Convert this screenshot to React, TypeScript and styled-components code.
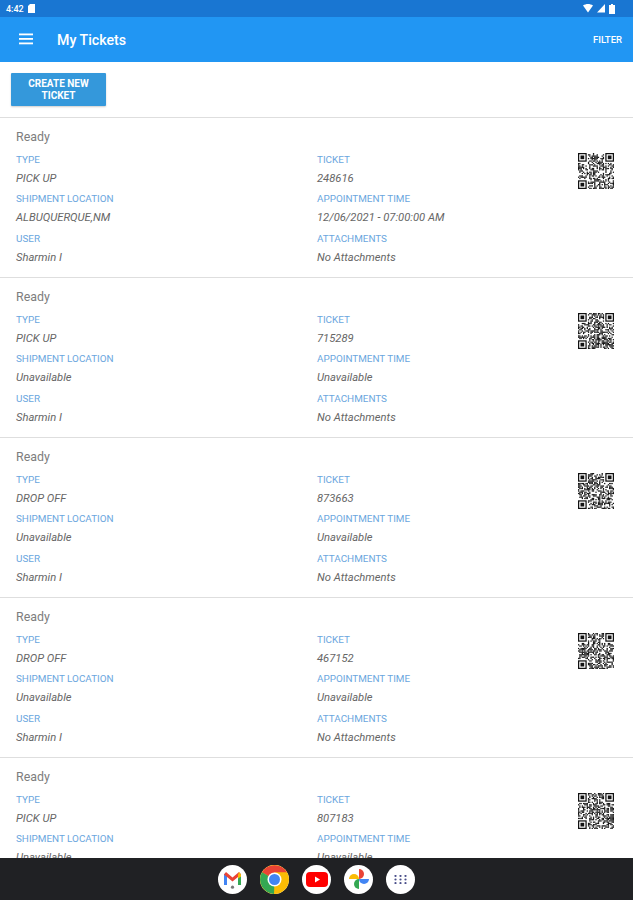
import React from 'react';
import styled, { createGlobalStyle } from 'styled-components';

const GlobalStyle = createGlobalStyle`
  html, body {
    margin: 0;
    padding: 0;
    background: #fff;
    font-family: Roboto, "Liberation Sans", sans-serif;
  }
`;

const Screen = styled.div`
  width: 633px;
  height: 900px;
  display: flex;
  flex-direction: column;
  overflow: hidden;
`;

const StatusBar = styled.div`
  height: 17px;
  flex: none;
  background: #1976d2;
  display: flex;
  align-items: center;
  justify-content: space-between;
  padding: 0 18px 0 6px;
  color: #fff;
  font-size: 9px;
  font-weight: 500;
`;

const StatusGroup = styled.div`
  display: flex;
  align-items: center;
  gap: 4px;
`;

const AppBar = styled.header`
  height: 45px;
  flex: none;
  background: #2196f3;
  color: #fff;
  display: flex;
  align-items: center;
  padding: 0 11px 0 19px;
`;

const MenuIcon = styled.svg`
  display: block;
  width: 14px;
  height: 12px;
  margin-top: -2px;
`;

const Title = styled.h1`
  margin: 0 0 0 24px;
  font-size: 14.2px;
  font-weight: 500;
  flex: 1;
`;

const FilterLink = styled.span`
  font-size: 9.5px;
  font-weight: 500;
`;

const Toolbar = styled.div`
  height: 55px;
  flex: none;
  padding: 11px;
  box-sizing: border-box;
`;

const CreateButton = styled.button`
  display: block;
  width: 95px;
  height: 33px;
  padding: 0 8px;
  border: 0;
  border-radius: 1px;
  background: #3498db;
  box-shadow: 0 1px 2px rgba(0, 0, 0, 0.2);
  color: #fff;
  font-family: inherit;
  font-size: 10px;
  font-weight: 700;
  line-height: 12px;
`;

const List = styled.main`
  flex: 1;
  min-height: 0;
  overflow: hidden;
`;

const Card = styled.article`
  height: 160px;
  box-sizing: border-box;
  border-top: 1px solid #dedede;
  padding: 10px 19px 0 16px;
  display: grid;
  grid-template-columns: 301px 1fr 36px;
  grid-template-rows: 20px auto;
`;

const Status = styled.div`
  grid-column: 1 / -1;
  color: #7d7d7d;
  font-size: 12.4px;
  line-height: 18px;
`;

const Column = styled.div`
  display: flex;
  flex-direction: column;
  padding-top: 1.5px;
`;

const Label = styled.div`
  color: #6aa6de;
  font-size: 9.9px;
  line-height: 20px;
  height: 19px;
  text-transform: uppercase;
`;

const Value = styled.div`
  color: #666;
  font-size: 11.2px;
  font-style: italic;
  line-height: 20px;
  height: 20.5px;
`;

const QrBox = styled.svg`
  display: block;
  width: 36px;
  height: 36px;
  margin-top: 5px;
  filter: blur(0.4px);
`;

const Dock = styled.nav`
  height: 42px;
  flex: none;
  background: #202124;
  display: flex;
  align-items: center;
  justify-content: center;
  gap: 13px;
`;

const DockIcon = styled.div`
  width: 29px;
  height: 29px;
  border-radius: 50%;
  background: #fff;
  display: flex;
  flex-direction: column;
  align-items: center;
  justify-content: center;
`;

type Ticket = {
  type: string;
  ticket: string;
  location: string;
  time: string;
};

const tickets: Ticket[] = [
  { type: 'PICK UP', ticket: '248616', location: 'ALBUQUERQUE,NM', time: '12/06/2021 - 07:00:00 AM' },
  { type: 'PICK UP', ticket: '715289', location: 'Unavailable', time: 'Unavailable' },
  { type: 'DROP OFF', ticket: '873663', location: 'Unavailable', time: 'Unavailable' },
  { type: 'DROP OFF', ticket: '467152', location: 'Unavailable', time: 'Unavailable' },
  { type: 'PICK UP', ticket: '807183', location: 'Unavailable', time: 'Unavailable' },
];

// fake qr, modules come from the ticket number
function QrCode({ seed }: { seed: string }) {
  const size = 29;
  let state = Number(seed);
  const cells: React.ReactNode[] = [];

  const inFinder = (x: number, y: number) =>
    (x < 8 && y < 8) || (x >= size - 8 && y < 8) || (x < 8 && y >= size - 8);

  for (let y = 0; y < size; y++) {
    for (let x = 0; x < size; x++) {
      state = (state * 1103515245 + 12345) % 2147483648;
      if (!inFinder(x, y) && (state >> 8) % 100 < 50) {
        cells.push(<rect key={`${x}-${y}`} x={x} y={y} width={1.02} height={1.02} />);
      }
    }
  }

  const finders = [
    [0, 0],
    [size - 7, 0],
    [0, size - 7],
  ];

  return (
    <QrBox viewBox={`0 0 ${size} ${size}`} fill="#111">
      {cells}
      {finders.map(([x, y]) => (
        <g key={`${x}-${y}`}>
          <rect x={x} y={y} width={7} height={7} />
          <rect x={x + 1} y={y + 1} width={5} height={5} fill="#fff" />
          <rect x={x + 2} y={y + 2} width={3} height={3} />
        </g>
      ))}
    </QrBox>
  );
}

function StatusIcons() {
  return (
    <StatusGroup>
      <svg width="10" height="9" viewBox="0 0 10 9">
        <path d="M0 1.5C3 -0.5 7 -0.5 10 1.5L5 8.5Z" fill="#fff" />
      </svg>
      <svg width="8" height="9" viewBox="0 0 8 9">
        <path d="M8 0V8.5H0Z" fill="#fff" />
      </svg>
      <svg width="6" height="10" viewBox="0 0 6 10">
        <path d="M2 0H4V1H6V10H0V1H2Z" fill="#fff" />
      </svg>
    </StatusGroup>
  );
}

function GmailIcon() {
  return (
    <>
      <svg width="17" height="13" viewBox="0 0 17 13" style={{ marginTop: 2 }}>
        <path d="M0 13V2L3 1V13Z" fill="#4285f4" />
        <path d="M14 13V1L17 2V13Z" fill="#34a853" />
        <path d="M0 2.5L2 0L8.5 5.5L15 0L17 2.5L8.5 9.5Z" fill="#ea4335" />
        <path d="M14 3L15 0L17 2.5V4.5L14 6.5Z" fill="#fbbc04" />
      </svg>
      <svg width="5" height="4" viewBox="0 0 5 4">
        <circle cx="2.5" cy="2.2" r="1.6" fill="#777" />
      </svg>
    </>
  );
}

function ChromeIcon() {
  return (
    <svg width="29" height="29" viewBox="0 0 29 29" style={{ display: 'block' }}>
      <circle cx="14.5" cy="14.5" r="14.5" fill="#fbbc04" />
      <path d="M14.5 14.5L2 7.3A14.5 14.5 0 0 1 27 7.3H14.5Z" fill="#ea4335" />
      <path d="M14.5 14.5L14 29A14.5 14.5 0 0 1 2 7.3Z" fill="#34a853" />
      <circle cx="14.5" cy="14.5" r="7" fill="#fff" />
      <circle cx="14.5" cy="14.5" r="5.5" fill="#4285f4" />
    </svg>
  );
}

function YoutubeIcon() {
  return (
    <svg width="22" height="15" viewBox="0 0 22 15">
      <rect width="22" height="15" rx="4" fill="#f00" />
      <path d="M9 4.5L14 7.5L9 10.5Z" fill="#fff" />
    </svg>
  );
}

function PhotosIcon() {
  return (
    <svg width="20" height="20" viewBox="0 0 20 20">
      <path d="M10 10H0A5 5 0 0 1 10 10Z" fill="#fbbc04" />
      <path d="M10 10V0A5 5 0 0 1 10 10Z" fill="#ea4335" />
      <path d="M10 10H20A5 5 0 0 1 10 10Z" fill="#4285f4" />
      <path d="M10 10V20A5 5 0 0 1 10 10Z" fill="#34a853" />
    </svg>
  );
}

function AppsIcon() {
  const dots = [0, 1, 2].flatMap((row) => [0, 1, 2].map((col) => ({ row, col })));
  return (
    <svg width="13" height="9" viewBox="0 0 13 9">
      {dots.map(({ row, col }) => (
        <circle key={`${row}${col}`} cx={1.5 + col * 5} cy={1 + row * 3.5} r="1.1" fill="#4a4f8a" />
      ))}
    </svg>
  );
}

function TicketCard({ item }: { item: Ticket }) {
  return (
    <Card>
      <Status>Ready</Status>
      <Column>
        <Label>Type</Label>
        <Value>{item.type}</Value>
        <Label>Shipment Location</Label>
        <Value>{item.location}</Value>
        <Label>User</Label>
        <Value>Sharmin I</Value>
      </Column>
      <Column>
        <Label>Ticket</Label>
        <Value>{item.ticket}</Value>
        <Label>Appointment Time</Label>
        <Value>{item.time}</Value>
        <Label>Attachments</Label>
        <Value>No Attachments</Value>
      </Column>
      <QrCode seed={item.ticket} />
    </Card>
  );
}

export default function App() {
  return (
    <Screen>
      <GlobalStyle />
      <StatusBar>
        <StatusGroup>
          4:42
          <svg width="7" height="9" viewBox="0 0 7 9">
            <path d="M2 0H7V9H0V2Z" fill="#fff" />
          </svg>
        </StatusGroup>
        <StatusIcons />
      </StatusBar>
      <AppBar>
        <MenuIcon viewBox="0 0 14 12" fill="#fff">
          <rect y="0.5" width="14" height="1.8" />
          <rect y="5" width="14" height="1.8" />
          <rect y="9.5" width="14" height="1.8" />
        </MenuIcon>
        <Title>My Tickets</Title>
        <FilterLink>FILTER</FilterLink>
      </AppBar>
      <Toolbar>
        <CreateButton>CREATE NEW TICKET</CreateButton>
      </Toolbar>
      <List>
        {tickets.map((item) => (
          <TicketCard key={item.ticket} item={item} />
        ))}
      </List>
      <Dock>
        <DockIcon>
          <GmailIcon />
        </DockIcon>
        <DockIcon>
          <ChromeIcon />
        </DockIcon>
        <DockIcon>
          <YoutubeIcon />
        </DockIcon>
        <DockIcon>
          <PhotosIcon />
        </DockIcon>
        <DockIcon>
          <AppsIcon />
        </DockIcon>
      </Dock>
    </Screen>
  );
}
